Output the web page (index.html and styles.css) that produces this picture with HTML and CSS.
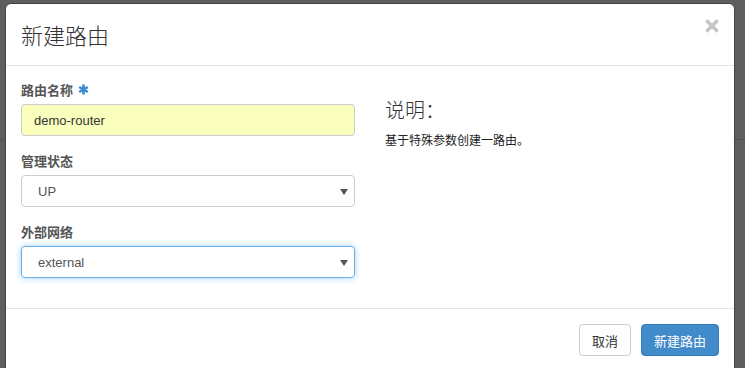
FILE: index.html
```html
<!DOCTYPE html>
<html lang="zh-CN">
<head>
    <meta charset="UTF-8">
    <title>新建路由</title>
    <link rel="stylesheet" href="styles.css">
</head>
<body>
    <div class="modal">
        <div class="modal-header">
            <h3 class="modal-title">新建路由</h3>
            <button class="close-button" aria-label="关闭">
                <svg width="14" height="14" viewBox="0 0 14 14">
                    <path d="M2.5 2.5 L11.5 11.5 M11.5 2.5 L2.5 11.5" stroke="#c6c6c6" stroke-width="3.6" stroke-linecap="round"/>
                </svg>
            </button>
        </div>

        <div class="modal-body">
            <div class="form-column">
                <div class="form-group">
                    <label class="field-label">路由名称
                        <svg class="required" width="11" height="11" viewBox="0 0 11 11">
                            <path d="M5.5 0.5 V10.5 M1.2 3 L9.8 8 M9.8 3 L1.2 8" stroke="#3a8ad2" stroke-width="2.6"/>
                        </svg>
                    </label>
                    <div class="text-input autofilled">demo-router</div>
                </div>
                <div class="form-group">
                    <label class="field-label">管理状态</label>
                    <div class="select-input">
                        <span>UP</span>
                        <svg width="8" height="6" viewBox="0 0 8 6"><path d="M0 0 H8 L4 6 Z" fill="#555"/></svg>
                    </div>
                </div>
                <div class="form-group">
                    <label class="field-label">外部网络</label>
                    <div class="select-input focused">
                        <span>external</span>
                        <svg width="8" height="6" viewBox="0 0 8 6"><path d="M0 0 H8 L4 6 Z" fill="#555"/></svg>
                    </div>
                </div>
            </div>
            <div class="help-column">
                <h3 class="help-title">说明：</h3>
                <p class="help-text">基于特殊参数创建一路由。</p>
            </div>
        </div>

        <div class="modal-footer">
            <button class="btn btn-default">取消</button>
            <button class="btn btn-primary">新建路由</button>
        </div>
    </div>
</body>
</html>
```

FILE: styles.css
```css
body {
    font-family: "Liberation Sans", "Noto Sans CJK SC", Arial, sans-serif;
    font-size: 13px;
    color: #333;
    margin: 0;
    height: 368px;
    overflow: hidden;
    background-color: #5e5e5e;
    background-image: linear-gradient(to bottom, transparent 139px, #525252 139px, #525252 140px, transparent 140px);
}
.modal {
    width: 728px;
    margin: 3px 0 0 5px;
    background-color: #fff;
    border: 1px solid #444;
    border-radius: 6px;
    height: 400px;
}
.modal-header {
    display: flex;
    justify-content: space-between;
    align-items: flex-start;
    padding: 15px 15px 16px;
    border-bottom: 1px solid #e5e5e5;
}
.modal-title {
    margin: 0;
    font-family: "Noto Sans CJK SC", sans-serif;
    font-size: 22px;
    font-weight: 300;
    line-height: 30px;
    color: #333;
}
.close-button {
    background: none;
    border: none;
    padding: 0;
    margin-top: 0;
    cursor: pointer;
    line-height: 0;
}
.modal-body {
    display: grid;
    grid-template-columns: 334px 1fr;
    column-gap: 30px;
    padding: 15px 15px 14px;
}
.form-group {
    margin-bottom: 16px;
}
.field-label {
    display: flex;
    align-items: center;
    gap: 5px;
    font-family: "Noto Sans CJK SC", sans-serif;
    font-weight: bold;
    font-size: 13px;
    line-height: 18px;
    color: #555;
    margin-bottom: 5px;
}
.required {
    margin-top: -2px;
}
.text-input,
.select-input {
    box-sizing: border-box;
    height: 32px;
    border: 1px solid #ccc;
    border-radius: 4px;
    font-size: 13px;
    color: #555;
    display: flex;
    align-items: center;
}
.text-input {
    padding: 0 12px;
}
.autofilled {
    background-color: #faffbd;
    color: #333;
}
.select-input {
    justify-content: space-between;
    padding: 0 6px 0 16px;
}
.select-input svg {
    margin-top: 1px;
}
.focused {
    border-color: #66afe9;
    box-shadow: 0 0 6px rgba(102, 175, 233, 0.6);
}
.help-title {
    margin: 16px 0 8px;
    font-family: "Noto Sans CJK SC", sans-serif;
    font-size: 20px;
    font-weight: 300;
    line-height: 26px;
    color: #333;
}
.help-text {
    margin: 0;
    font-family: "Noto Sans CJK SC", sans-serif;
    font-size: 12px;
    line-height: 18px;
    color: #222;
}
.modal-footer {
    display: flex;
    justify-content: flex-end;
    gap: 10px;
    padding: 15px;
    border-top: 1px solid #e5e5e5;
}
.btn {
    font-family: "Noto Sans CJK SC", sans-serif;
    font-size: 13px;
    height: 32px;
    padding: 0 12px;
    border-radius: 4px;
    cursor: pointer;
}
.btn-default {
    background-color: #fff;
    border: 1px solid #ccc;
    color: #333;
}
.btn-primary {
    background-color: #428bca;
    border: 1px solid #357ebd;
    color: #fff;
}
```
